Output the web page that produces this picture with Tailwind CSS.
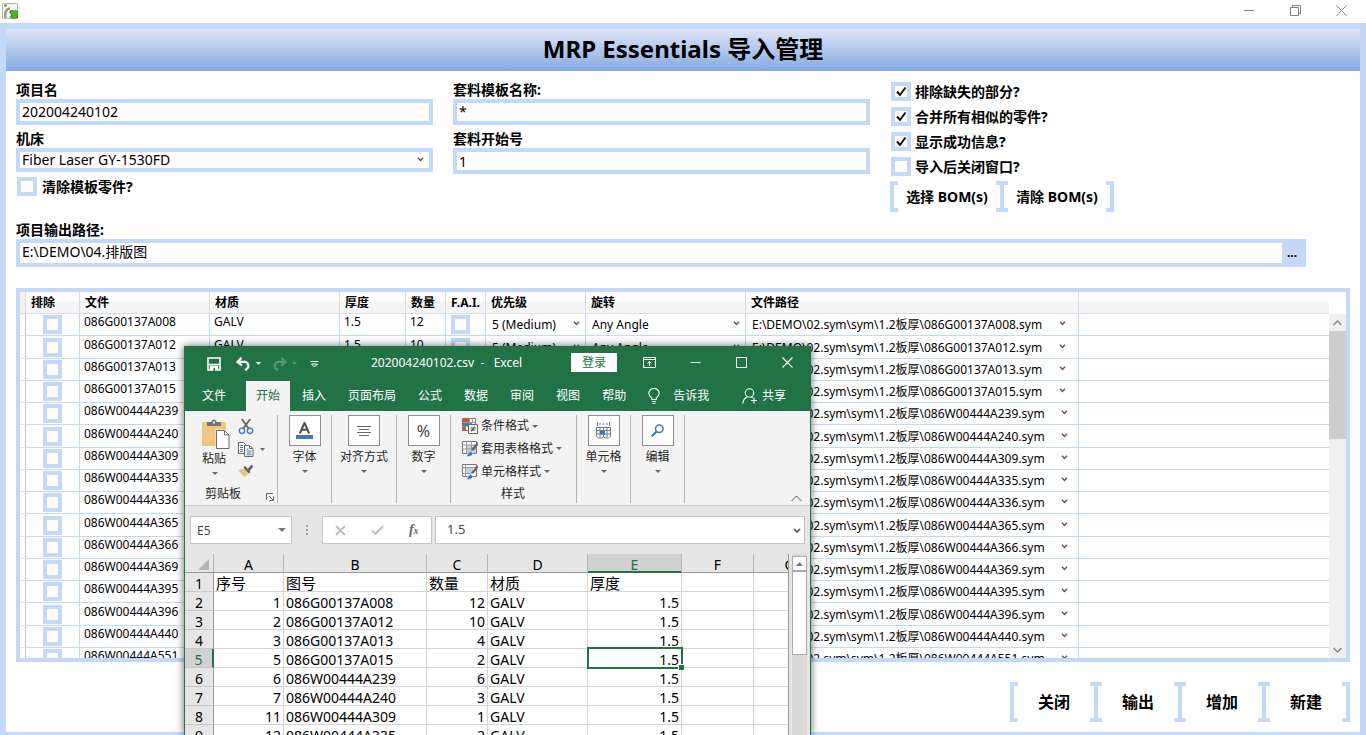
<!DOCTYPE html>
<html lang="zh-CN">
<head>
<meta charset="utf-8">
<title>MRP Essentials 导入管理</title>
<script src="https://cdn.jsdelivr.net/npm/@tailwindcss/browser@4"></script>
</head>
<body class="relative flex h-screen flex-col overflow-hidden bg-white font-['Noto_Sans','Noto_Sans_CJK_SC',sans-serif] text-sm text-black">

<!-- Window title bar -->
<header class="flex h-[23px] shrink-0 items-start justify-between">
  <svg class="mt-[3px] ml-[2px] size-4" viewBox="0 0 16 16">
    <rect x=".5" y=".5" width="15" height="15" rx="1" fill="#f6f6f6" stroke="#b4b4b4"/>
    <path d="M3.300 15v-3.500c0-3.500 1.700-5.500 4.700-6" fill="none" stroke="#9a9a94" stroke-width="2.400"/>
    <path d="M3.500 1v3M2 2.500h3" stroke="#5cc22c" stroke-width="1.600"/>
    <path d="M7.500 9c.8-2 3-2.200 4.800-.4l1.200-1.400 2 1.300v6.500H9.500L8 13.500l2-1.300c-.8-1.200-1.500-1.700-2.500-3.200z" fill="#4fb322" stroke="#2b7a14" stroke-width=".8"/>
  </svg>
  <div class="mr-0.5 flex h-5 text-[#808080]">
    <button aria-label="最小化" class="grid w-[46px] place-items-center"><svg class="size-[11px]" viewBox="0 0 11 11"><path d="M0 5.500h10" stroke="currentColor"/></svg></button>
    <button aria-label="还原" class="grid w-[46px] place-items-center"><svg class="size-[11px]" viewBox="0 0 11 11" fill="none" stroke="currentColor"><path d="M.5 2.500h8v8h-8zM2.500 2.500v-2h8v8h-2"/></svg></button>
    <button aria-label="关闭窗口" class="grid w-[46px] place-items-center"><svg class="size-[11px]" viewBox="0 0 11 11"><path d="M.5 .5l10 10M10.500 .5l-10 10" stroke="currentColor"/></svg></button>
  </div>
</header>

<main class="flex min-h-0 flex-1 flex-col border-x-[6px] border-t-[6px] border-b-[3px] border-[#c4d8f8]">
  <h1 class="shrink-0 bg-linear-to-b from-[#dfe4f6] to-[#86abe1] pb-0.5 text-center text-2xl leading-10 font-bold">MRP Essentials 导入管理</h1>

  <div class="flex min-h-0 flex-1 flex-col px-2.5 pt-2.5 pb-2.5">
    <form class="grid shrink-0 grid-cols-[417fr_417fr_460fr] gap-x-5">
      <div>
        <label for="project" class="block leading-[18px] font-bold">项目名</label>
        <input id="project" value="202004240102" class="block h-[26px] w-full border-4 border-[#c4d8f8] bg-white px-0.5 pb-0.5">
        <label for="machine" class="mt-[5px] block leading-[18px] font-bold">机床</label>
        <div class="relative">
          <select id="machine" class="block h-6 w-full appearance-none border-4 border-[#c4d8f8] bg-white px-0.5 leading-4"><option>Fiber Laser GY-1530FD</option></select>
          <svg class="pointer-events-none absolute top-[9px] right-[9px] h-[5px] w-[7px]" viewBox="0 0 7 5" fill="none" stroke="#555" stroke-width="1.400"><path d="M1 .7l2.500 2.800L6 .7"/></svg>
        </div>
        <label class="mt-[5px] ml-px flex h-[19px] items-center gap-[5px] font-bold"><input type="checkbox" class="h-[19px] w-5 appearance-none border-4 border-[#c4d8f8] bg-white">清除模板零件?</label>
      </div>
      <div>
        <label for="tpl" class="block leading-[18px] font-bold">套料模板名称:</label>
        <input id="tpl" value="*" class="block h-[26px] w-full border-4 border-[#c4d8f8] bg-white px-0.5 pb-0.5">
        <label for="start" class="mt-[5px] block leading-[18px] font-bold">套料开始号</label>
        <input id="start" value="1" class="block h-[26px] w-full border-4 border-[#c4d8f8] bg-white px-0.5">
      </div>
      <div>
        <div class="mt-px ml-px flex flex-col gap-1.5 font-bold">
          <label class="grid h-[19px] grid-cols-[20px_1fr] items-center gap-x-1 leading-[18px]"><input type="checkbox" checked class="peer col-start-1 row-start-1 h-[19px] w-5 appearance-none border-4 border-[#c4d8f8] bg-white"><svg class="pointer-events-none invisible col-start-1 row-start-1 size-[11px] justify-self-center peer-checked:visible" viewBox="0 0 11 11"><path d="M1 5.500l3 3.500L9.500 1.500" fill="none" stroke="#111" stroke-width="2"/></svg>排除缺失的部分?</label>
          <label class="grid h-[19px] grid-cols-[20px_1fr] items-center gap-x-1 leading-[18px]"><input type="checkbox" checked class="peer col-start-1 row-start-1 h-[19px] w-5 appearance-none border-4 border-[#c4d8f8] bg-white"><svg class="pointer-events-none invisible col-start-1 row-start-1 size-[11px] justify-self-center peer-checked:visible" viewBox="0 0 11 11"><path d="M1 5.500l3 3.500L9.500 1.500" fill="none" stroke="#111" stroke-width="2"/></svg>合并所有相似的零件?</label>
          <label class="grid h-[19px] grid-cols-[20px_1fr] items-center gap-x-1 leading-[18px]"><input type="checkbox" checked class="peer col-start-1 row-start-1 h-[19px] w-5 appearance-none border-4 border-[#c4d8f8] bg-white"><svg class="pointer-events-none invisible col-start-1 row-start-1 size-[11px] justify-self-center peer-checked:visible" viewBox="0 0 11 11"><path d="M1 5.500l3 3.500L9.500 1.500" fill="none" stroke="#111" stroke-width="2"/></svg>显示成功信息?</label>
          <label class="grid h-[19px] grid-cols-[20px_1fr] items-center gap-x-1 leading-[18px]"><input type="checkbox" class="col-start-1 row-start-1 h-[19px] w-5 appearance-none border-4 border-[#c4d8f8] bg-white">导入后关闭窗口?</label>
        </div>
        <div class="mt-[5px] flex">
          <button type="button" class="flex h-[31px] w-[114px] items-center justify-between font-bold whitespace-nowrap before:h-full before:w-2 before:border-4 before:border-r-0 before:border-[#c4d8f8] after:h-full after:w-2 after:border-4 after:border-l-0 after:border-[#c4d8f8]">选择 BOM(s)</button>
          <button type="button" class="-ml-1 flex h-[31px] w-[114px] items-center justify-between font-bold whitespace-nowrap before:h-full before:w-2 before:border-4 before:border-r-0 before:border-[#c4d8f8] after:h-full after:w-2 after:border-4 after:border-l-0 after:border-[#c4d8f8]">清除 BOM(s)</button>
        </div>
      </div>
    </form>

    <div class="mt-[9px] mr-11 shrink-0">
      <label for="out" class="block leading-[18px] font-bold">项目输出路径:</label>
      <div class="flex h-7">
        <input id="out" value="E:\DEMO\04.排版图" class="min-w-0 flex-1 border-4 border-r-0 border-[#c4d8f8] bg-white px-0.5 pb-0.5">
        <button class="w-6 bg-[#c4d8f8] pr-1 text-xs font-bold">...</button>
      </div>
    </div>

    <!-- Part list -->
    <section class="mt-[21px] flex min-h-0 flex-1 border-4 border-[#c4d8f8]">
      <div class="min-w-0 flex-1 overflow-hidden">
        <table class="w-full table-fixed border-separate border-spacing-0 text-xs">
          <colgroup><col class="w-[6px]"><col class="w-[54px]"><col class="w-[130px]"><col class="w-[130px]"><col class="w-[66px]"><col class="w-[40px]"><col class="w-[40px]"><col class="w-[100px]"><col class="w-[160px]"><col class="w-[333px]"><col></colgroup>
          <thead class="bg-linear-to-b from-white from-40% to-[#f4f5f7] to-45%">
            <tr class="h-[22px] text-left whitespace-nowrap *:border-r *:border-b *:border-[#dcdcdc] *:pt-0 *:pb-0 *:pl-[5px] *:leading-4">
              <th class="bg-[#f0f0f0]"></th><th>排除</th><th>文件</th><th>材质</th><th>厚度</th><th>数量</th><th>F.A.I.</th><th>优先级</th><th>旋转</th><th>文件路径</th><th class="!border-r-0"></th>
            </tr>
          </thead>
          <tbody id="parts"></tbody>
        </table>
      </div>
      <div class="flex w-[17px] shrink-0 flex-col pt-[22px]">
        <div class="flex flex-1 flex-col items-center bg-[#f0f0f0]">
          <button aria-label="向上滚动" class="grid h-[17px] w-full place-items-center"><svg class="h-[6px] w-[9px]" viewBox="0 0 9 6" fill="none" stroke="#8a8a8a" stroke-width="1.500"><path d="M.7 5l3.800-4 3.800 4"/></svg></button>
          <div class="h-[108px] w-full bg-[#cdcdcd]"></div>
          <button aria-label="向下滚动" class="mt-auto grid h-[17px] w-full place-items-center"><svg class="h-[6px] w-[9px]" viewBox="0 0 9 6" fill="none" stroke="#8a8a8a" stroke-width="1.500"><path d="M.7 1l3.800 4 3.800-4"/></svg></button>
        </div>
      </div>
    </section>

    <div class="mt-5 flex shrink-0 justify-end">
      <button class="flex h-10 w-[88px] items-center justify-between text-base font-bold before:h-full before:w-2 before:border-4 before:border-r-0 before:border-[#c4d8f8] after:h-full after:w-2 after:border-4 after:border-l-0 after:border-[#c4d8f8]">关闭</button>
      <button class="-ml-1 flex h-10 w-[88px] items-center justify-between text-base font-bold before:h-full before:w-2 before:border-4 before:border-r-0 before:border-[#c4d8f8] after:h-full after:w-2 after:border-4 after:border-l-0 after:border-[#c4d8f8]">输出</button>
      <button class="-ml-1 flex h-10 w-[88px] items-center justify-between text-base font-bold before:h-full before:w-2 before:border-4 before:border-r-0 before:border-[#c4d8f8] after:h-full after:w-2 after:border-4 after:border-l-0 after:border-[#c4d8f8]">增加</button>
      <button class="-ml-1 flex h-10 w-[88px] items-center justify-between text-base font-bold before:h-full before:w-2 before:border-4 before:border-r-0 before:border-[#c4d8f8] after:h-full after:w-2 after:border-4 after:border-l-0 after:border-[#c4d8f8]">新建</button>
    </div>
  </div>
</main>

<!-- Excel window floating over the manager -->
<section aria-label="Excel" class="absolute top-[346px] bottom-0 left-[184px] flex w-[627px] flex-col overflow-hidden border-x border-[#217346] bg-[#e6e6e6] text-xs text-[#262626] shadow-[0_0_8px_rgba(0,0,0,0.6)]">
  <div class="flex h-[35px] shrink-0 items-center bg-[#217346] pb-0.5 text-white">
    <div class="flex w-[180px] items-center pt-0.5 pl-[22px]">
      <button aria-label="保存"><svg class="size-[14px]" viewBox="0 0 14 14"><path d="M1 1h12v12H1z" fill="none" stroke="#fff" stroke-width="1.600"/><path d="M1 7.500h12M3.500 13V9.500h7V13" fill="none" stroke="#fff" stroke-width="1.400"/><path d="M4 10h6v3H4z" fill="#fff"/><path d="M6.500 11h1.600v3H6.500z" fill="#217346"/></svg></button>
      <button aria-label="撤消" class="ml-[15px] flex items-center gap-[5px]"><svg class="h-[14px] w-[15px]" viewBox="0 0 15 14" fill="none" stroke="#fff" stroke-width="2.200"><path d="M5.500 .8L1.500 5l4.500 3.500M2 4.800h6.500a4 4 0 0 1 2 7.400l-1.500 .8"/></svg><svg class="h-[3px] w-[5px]" viewBox="0 0 5 3"><path d="M0 0h5L2.500 3z" fill="#fff"/></svg></button>
      <button aria-label="恢复" class="ml-[11px] flex items-center gap-[5px] opacity-25"><svg class="h-[14px] w-[15px]" viewBox="0 0 15 14" fill="none" stroke="#fff" stroke-width="2.200"><path d="M9.500 .8l4 4.200L9 8.500M13 4.800H6.500a4 4 0 0 0-2 7.400l1.500 .8"/></svg><svg class="h-[3px] w-[5px]" viewBox="0 0 5 3"><path d="M0 0h5L2.500 3z" fill="#fff"/></svg></button>
      <button aria-label="自定义快速访问工具栏" class="ml-[13px]"><svg class="h-[8px] w-[9px]" viewBox="0 0 9 8"><path d="M.5 1.500h8" stroke="#fff"/><path d="M1.500 4l3 3 3-3z" fill="none" stroke="#fff"/></svg></button>
    </div>
    <div class="flex-1 pl-[6px] whitespace-pre">202004240102.csv  -   Excel</div>
    <button class="h-[19px] w-[46px] bg-white text-[#217346]">登录</button>
    <button aria-label="功能区显示选项" class="ml-[9px] grid w-[46px] place-items-center"><svg class="h-[11px] w-[13px]" viewBox="0 0 13 11" fill="none" stroke="#fff"><path d="M.5 .5h12v10H.5zM.5 2.500h12M6.500 9V4.500M4.500 6.500l2-2 2 2"/></svg></button>
    <button aria-label="最小化 Excel" class="grid w-[46px] place-items-center"><svg class="h-[11px] w-[11px]" viewBox="0 0 11 11"><path d="M.5 5.500h10" stroke="#fff"/></svg></button>
    <button aria-label="最大化 Excel" class="grid w-[46px] place-items-center"><svg class="h-[11px] w-[11px]" viewBox="0 0 11 11"><path d="M.5 .5h10v10H.5z" fill="none" stroke="#fff"/></svg></button>
    <button aria-label="关闭 Excel" class="grid w-[46px] place-items-center"><svg class="h-[11px] w-[11px]" viewBox="0 0 11 11"><path d="M.5 .5l10 10M10.500 .5l-10 10" stroke="#fff" stroke-width="1.200"/></svg></button>
  </div>

  <nav class="flex h-[30px] shrink-0 items-stretch bg-[#217346] pl-[6px] text-white *:whitespace-nowrap">
    <button class="mx-px mr-[9px] px-2.5">文件</button>
    <button class="mx-px bg-[#f3f3f3] px-2.5 text-[#217346]">开始</button>
    <button class="mx-px px-2.5">插入</button>
    <button class="mx-px px-2.5">页面布局</button>
    <button class="mx-px px-2.5">公式</button>
    <button class="mx-px px-2.5">数据</button>
    <button class="mx-px px-2.5">审阅</button>
    <button class="mx-px px-2.5">视图</button>
    <button class="mx-px px-2.5">帮助</button>
    <button class="ml-[11px] flex items-center gap-[13px]"><svg class="h-[16px] w-[12px]" viewBox="0 0 12 16" fill="none" stroke="#fff" stroke-width="1.100"><path d="M3.800 11.500V10C2.500 9 .8 7.800 .8 5.600a5.200 5.200 0 0 1 10.400 0c0 2.200-1.700 3.400-3 4.400v1.500zM4 13.500h4M4.500 15.500h3"/></svg>告诉我</button>
    <button class="mr-6 ml-auto flex items-center gap-1"><svg class="size-4" viewBox="0 0 16 16" fill="none" stroke="#fff" stroke-width="1.100"><circle cx="7.500" cy="5" r="4.200"/><path d="M.8 15.500c.3-3.500 2-5.500 4.500-6.500M9.500 9l1.200 .8M12 9.500v6M9 12.500h6"/></svg>共享</button>
  </nav>

  <!-- Ribbon -->
  <div class="relative flex h-[95px] shrink-0 border-b border-[#d0d0d0] bg-[#f3f3f3] pt-1 pb-0.5 whitespace-nowrap">
    <div class="relative flex w-[93px] flex-col border-r border-[#b5b5b5] pl-[17px]">
      <div class="flex h-[70px] shrink-0 gap-2 pt-1">
        <button class="flex w-7 flex-col items-start">
          <svg class="h-[30px] w-7 shrink-0" viewBox="0 0 28 30"><path d="M0 3h24v24H0z" fill="#edc87e"/><path d="M5 7V3h4.500a2.500 2.500 0 0 1 5 0H19v4z" fill="#757575"/><path d="M11 2.500h2v2h-2z" fill="#f3f3f3"/><path d="M13.500 10.500h10l4.500 4.500v15H13.500z" fill="#f3f3f3"/><path d="M14.500 11.500h8l4.500 4.500v13.500H14.500z" fill="#fff" stroke="#6b6b6b"/><path d="M22.500 11.500V16H27" fill="none" stroke="#6b6b6b"/></svg>
          <span class="leading-5">粘贴</span>
          <svg class="mt-[3px] ml-[10px] h-[3px] w-[6px]" viewBox="0 0 6 3"><path d="M0 0h6L3 3z" fill="#666"/></svg>
        </button>
        <div class="flex flex-col items-start gap-[7px]">
          <button aria-label="剪切"><svg class="block size-4" viewBox="0 0 16 16" fill="none"><path d="M3.800 0L11 10M12.200 0L5 10" stroke="#666" stroke-width="1.900"/><circle cx="4" cy="11.800" r="2.700" stroke="#4478b4" stroke-width="1.300"/><circle cx="12" cy="11.800" r="2.700" stroke="#4478b4" stroke-width="1.300"/></svg></button>
          <button aria-label="复制" class="flex items-center gap-[6px]"><svg class="block h-[15px] w-4" viewBox="0 0 16 15" fill="#fff" stroke="#666"><path d="M.5 .5h5l2 2v9h-7z"/><path d="M6.500 3.500h5l3.500 3v8H6.500z"/><path d="M11.500 3.500v3H15" fill="none"/><path d="M2 3.500h3M2 5.500h3M2 7.500h3M2 9.500h3M8.500 7h2M8.500 9h5M8.500 11h5M8.500 12.800h5" stroke="#4478b4"/></svg><svg class="h-[3px] w-[5px]" viewBox="0 0 5 3"><path d="M0 0h5L2.500 3z" fill="#666"/></svg></button>
          <button aria-label="格式刷"><svg class="block h-[14px] w-4" viewBox="0 0 16 14"><path d="M0 6l6-1.500L11 9l-4.500 4.500z" fill="#edc380"/><path d="M5.500 3.500l5.500 6 1.500-1.500-5.500-6z" fill="#555"/><path d="M9 5.500L13.500 .8l2 1.700L11 7.500z" fill="#666"/></svg></button>
        </div>
      </div>
      <div class="pl-[3px] leading-[18px]">剪贴板</div>
      <button aria-label="剪贴板选项" class="absolute right-[3px] bottom-0.5"><svg class="block size-[8px]" viewBox="0 0 8 8" fill="none" stroke="#666"><path d="M.5 7V.5H7M3 3l4 4M7.500 3.500v4h-4"/></svg></button>
    </div>
    <button class="flex w-[54px] flex-col items-center border-r border-[#b5b5b5]">
      <span class="grid h-[31px] w-8 place-items-center border border-[#8f8f8f] bg-white"><svg class="size-[17px]" viewBox="0 0 17 17"><path d="M3.800 11.500L8.500 .8l4.700 10.700M5.500 7.800h6" fill="none" stroke="#505050" stroke-width="2"/><path d="M0 13h17v4H0z" fill="#4478b4"/></svg></span>
      <span class="mt-0.5 leading-[18px]">字体</span>
      <svg class="mt-[4px] h-[3px] w-[6px]" viewBox="0 0 6 3"><path d="M0 0h6L3 3z" fill="#666"/></svg>
    </button>
    <button class="flex w-[65px] flex-col items-center border-r border-[#b5b5b5]">
      <span class="grid h-[31px] w-8 place-items-center border border-[#8f8f8f] bg-white"><svg class="h-[12px] w-[14px]" viewBox="0 0 14 12"><path d="M0 1.500h14M2 4.500h10M0 7.500h14M2 10.500h10" stroke="#666"/></svg></span>
      <span class="mt-0.5 leading-[18px]">对齐方式</span>
      <svg class="mt-[4px] h-[3px] w-[6px]" viewBox="0 0 6 3"><path d="M0 0h6L3 3z" fill="#666"/></svg>
    </button>
    <button class="flex w-[54px] flex-col items-center border-r border-[#b5b5b5]">
      <span class="grid h-[31px] w-8 place-items-center border border-[#8f8f8f] bg-white text-base leading-5 text-[#444]">%</span>
      <span class="mt-0.5 leading-[18px]">数字</span>
      <svg class="mt-[4px] h-[3px] w-[6px]" viewBox="0 0 6 3"><path d="M0 0h6L3 3z" fill="#666"/></svg>
    </button>
    <div class="flex w-[126px] flex-col border-r border-[#b5b5b5] pl-[11px]">
      <div class="flex h-[70px] shrink-0 flex-col">
        <button class="flex h-[22px] items-center gap-[3px]"><svg class="size-4" viewBox="0 0 16 16"><path d="M.5 .5h13v12H.5z" fill="#fff" stroke="#777"/><path d="M1 1h6v3H1zM1 9h3v3H1z" fill="#d35230"/><path d="M1 5h9v3H1z" fill="#4478b4"/><path d="M.5 4.500h13M.5 8.500h13M7.500 .5v12M10.500 .5v4" stroke="#999" fill="none"/><path d="M6.500 6.500h9v9h-9z" fill="#fff" stroke="#666"/><path d="M8.500 10h5M8.500 12h5M12.500 8.500l-3 5" stroke="#444"/></svg><span>条件格式</span><svg class="h-[3px] w-[6px]" viewBox="0 0 6 3"><path d="M0 0h6L3 3z" fill="#666"/></svg></button>
        <button class="flex h-[23px] items-center gap-[3px]"><svg class="size-4" viewBox="0 0 16 16"><path d="M.5 .5h14v12H.5z" fill="#fff" stroke="#777"/><path d="M4 4h10v8H4z" fill="#bdd3ea"/><path d="M.5 4h14M.5 8h14M4.500 .5v12M9.500 .5v12" stroke="#999" fill="none"/><path d="M15.500 1l.5 3-5 6-2-1.500z" fill="#666"/><path d="M3.500 15.500c2 0 2-4 5-5.500l2.500 2c0 3-4 4-7.500 3.500z" fill="#4478b4" stroke="#fff" stroke-width=".6"/></svg><span>套用表格格式</span><svg class="h-[3px] w-[6px]" viewBox="0 0 6 3"><path d="M0 0h6L3 3z" fill="#666"/></svg></button>
        <button class="flex h-[23px] items-center gap-[3px]"><svg class="size-4" viewBox="0 0 16 16"><path d="M.5 .5h14v12H.5z" fill="#fff" stroke="#777"/><path d="M4 4h7v5H4z" fill="#bdd3ea"/><path d="M.5 3.500h14M.5 9.500h9M3.500 .5v12" stroke="#999" fill="none"/><path d="M15.500 1l.5 3-5 6-2-1.500z" fill="#666"/><path d="M3.500 15.500c2 0 2-4 5-5.500l2.500 2c0 3-4 4-7.500 3.500z" fill="#4478b4" stroke="#fff" stroke-width=".6"/></svg><span>单元格样式</span><svg class="h-[3px] w-[6px]" viewBox="0 0 6 3"><path d="M0 0h6L3 3z" fill="#666"/></svg></button>
      </div>
      <div class="pr-3 text-center leading-[18px]">样式</div>
    </div>
    <button class="flex w-[54px] flex-col items-center border-r border-[#b5b5b5]">
      <span class="grid h-[31px] w-8 place-items-center border border-[#8f8f8f] bg-white"><svg class="h-[17px] w-[15px]" viewBox="0 0 15 17" fill="none"><path d="M1.500 0v4M13.500 0v4M3 2h2M6.500 2h2M10 2h2" stroke="#4478b4"/><path d="M.5 5.500h14v9l-2 1.500H9l-1.500-1L6 16H2.500L.5 14.500zM.5 8.500h14M.5 12h14M4 5.500v10M11 5.500v10M7.500 5.500v3M7.500 12v3" stroke="#777"/><path d="M4 8.500h5v4H4z" fill="#4478b4"/></svg></span>
      <span class="mt-0.5 leading-[18px]">单元格</span>
      <svg class="mt-[4px] h-[3px] w-[6px]" viewBox="0 0 6 3"><path d="M0 0h6L3 3z" fill="#666"/></svg>
    </button>
    <button class="flex w-[54px] flex-col items-center border-r border-[#b5b5b5]">
      <span class="grid h-[31px] w-8 place-items-center border border-[#8f8f8f] bg-white"><svg class="size-[13px]" viewBox="0 0 13 13" fill="none" stroke="#4478b4"><circle cx="8.300" cy="4.700" r="3.800" stroke-width="1.500"/><path d="M5.500 7.500L.8 12.200" stroke-width="2.200"/></svg></span>
      <span class="mt-0.5 leading-[18px]">编辑</span>
      <svg class="mt-[4px] h-[3px] w-[6px]" viewBox="0 0 6 3"><path d="M0 0h6L3 3z" fill="#666"/></svg>
    </button>
    <button aria-label="折叠功能区" class="mr-2 mb-px ml-auto self-end"><svg class="block h-[7px] w-[11px]" viewBox="0 0 11 7"><path d="M.5 6L5.500 1l5 5" fill="none" stroke="#555"/></svg></button>
  </div>

  <!-- Formula bar -->
  <div class="flex shrink-0 px-[5px] pt-2.5">
    <div class="relative w-[102px]">
      <input aria-label="名称框" value="E5" class="h-7 w-full border border-[#c6c6c6] bg-white px-1.5 text-[#444]">
      <svg class="absolute top-3 right-[6px] h-[4px] w-[8px]" viewBox="0 0 8 4"><path d="M0 0h8L4 4z" fill="#777"/></svg>
    </div>
    <svg class="mt-[9px] ml-[14px] h-[10px] w-[2px]" viewBox="0 0 2 10"><path d="M0 0h2v2H0zM0 4h2v2H0zM0 8h2v2H0z" fill="#a0a0a0"/></svg>
    <div class="ml-[14px] flex h-7 w-[110px] items-center justify-around border border-[#c6c6c6] bg-white">
      <button aria-label="取消"><svg class="block size-[11px]" viewBox="0 0 11 11"><path d="M1 1l9 9M10 1l-9 9" stroke="#bdbdbd" stroke-width="1.800"/></svg></button>
      <button aria-label="输入"><svg class="block h-[10px] w-[13px]" viewBox="0 0 13 10"><path d="M1 5.500L4.500 9 12 1" fill="none" stroke="#bdbdbd" stroke-width="2"/></svg></button>
      <button aria-label="插入函数" class="font-['Liberation_Serif',serif] text-sm leading-5 font-bold text-[#666] italic">f<span class="text-[10px]">x</span></button>
    </div>
    <div class="relative ml-[3px] flex-1">
      <input aria-label="编辑栏" value="1.5" class="h-7 w-full border border-[#c6c6c6] bg-white px-[11px] pb-0.5 text-[13px] text-[#444]">
      <svg class="absolute top-3 right-[4px] h-[6px] w-[8px]" viewBox="0 0 8 6"><path d="M1 1l3 3 3-3" fill="none" stroke="#666" stroke-width="1.800"/></svg>
    </div>
  </div>

  <!-- Sheet -->
  <div class="mt-2.5 flex min-h-0 flex-1">
    <div class="w-[604px] overflow-hidden border-r border-[#999]">
      <table class="w-[641px] table-fixed border-separate border-spacing-0 text-sm leading-[15px] text-black">
        <colgroup><col class="w-[29px]"><col class="w-[70px]"><col class="w-[143px]"><col class="w-[61px]"><col class="w-[100px]"><col class="w-[94px]"><col class="w-[72px]"><col class="w-[72px]"></colgroup>
        <thead>
          <tr class="h-[19px] *:border-r *:border-b *:border-r-[#b5b5b5] *:border-b-[#999] *:px-0 *:pt-[3px] *:pb-0 *:font-normal">
            <th><svg class="mr-[4px] ml-auto size-[11px]" viewBox="0 0 11 11"><path d="M11 0v11H0z" fill="#b4b4b4"/></svg></th><th>A</th><th>B</th><th>C</th><th>D</th><th class="!border-b-[#217346] bg-[#d2d2d2] text-[#217346] shadow-[inset_0_-1px_0_#217346]">E</th><th>F</th><th>G</th>
          </tr>
        </thead>
        <tbody id="sheet"></tbody>
      </table>
    </div>
    <div class="ml-[3px] flex w-[15px] flex-col bg-[#dadada]">
      <button aria-label="工作表向上滚动" class="mt-0.5 grid h-[15px] shrink-0 place-items-center border border-[#ababab] bg-white"><svg class="h-[4px] w-[7px]" viewBox="0 0 7 4"><path d="M0 4h7L3.500 0z" fill="#777"/></svg></button>
      <div class="h-[84px] shrink-0 border border-[#ababab] bg-white"></div>
    </div>
  </div>
</section>

<script>
const parts = [
  ['086G00137A008', 12], ['086G00137A012', 10], ['086G00137A013', 4], ['086G00137A015', 2],
  ['086W00444A239', 6], ['086W00444A240', 3], ['086W00444A309', 1], ['086W00444A335', 2],
  ['086W00444A336', 1], ['086W00444A365', 1], ['086W00444A366', 1], ['086W00444A369', 1],
  ['086W00444A395', 1], ['086W00444A396', 1], ['086W00444A440', 1], ['086W00444A551', 1]
];
const numbers = [1, 2, 3, 5, 6, 7, 11, 12];
const box = label => `<input type="checkbox" aria-label="${label}" class="block size-[19px] appearance-none border-4 border-[#c4d8f8] bg-white">`;
const arrow = '<svg class="pointer-events-none absolute top-[7px] right-[5px] h-[5px] w-[7px]" viewBox="0 0 7 5" fill="none" stroke="#555" stroke-width="1.300"><path d="M1 .7l2.500 2.800L6 .7"/></svg>';

document.getElementById('parts').innerHTML = parts.map(([name, qty]) => `
  <tr class="h-[22px] whitespace-nowrap nth-[4n+2]:h-[23px] *:border-r *:border-b *:border-[#c4d8f8] *:p-0 *:align-top nth-[4n+2]:*:!pt-px">
    <th class="!border-r-[#c8c8c8] !border-b-[#e4e4e4]"></th>
    <td><div class="flex justify-center pt-px">${box('排除 ' + name)}</div></td>
    <td><div class="pl-1 leading-4">${name}</div></td>
    <td><div class="pl-1 leading-4">GALV</div></td>
    <td><div class="pl-1 leading-4">1.5</div></td>
    <td><div class="pl-1 leading-4">${qty}</div></td>
    <td><div class="pt-px pl-[5px]">${box('F.A.I. ' + name)}</div></td>
    <td><div class="relative"><select aria-label="优先级 ${name}" class="block h-[21px] w-full appearance-none pl-1.5"><option>5 (Medium)</option></select>${arrow}</div></td>
    <td><div class="relative"><select aria-label="旋转 ${name}" class="block h-[21px] w-full appearance-none pl-1.5"><option>Any Angle</option></select>${arrow}</div></td>
    <td><div class="relative w-fit"><select aria-label="文件路径 ${name}" class="block h-[21px] appearance-none pr-7 pl-1.5"><option>E:\\DEMO\\02.sym\\sym\\1.2板厚\\${name}.sym</option></select>${arrow}</div></td>
    <td class="!border-r-0"></td>
  </tr>`).join('');

const rowHead = (n, active) => `<th class="${active ? 'border-r-2 border-r-[#217346] bg-[#d2d2d2] text-[#217346]' : 'border-r border-r-[#999] bg-[#e6e6e6]'} border-b border-b-[#c6c6c6] px-0 pt-[3px] pb-0 font-normal">${n}</th>`;
const cell = (text, cls) => `<td class="border-r border-b border-[#d4d4d4] bg-white px-0.5 pt-[3px] pb-0 ${cls}">${text}</td>`;
let rows = `<tr class="h-[19px]">${rowHead(1, false)}${['序号', '图号', '数量', '材质', '厚度', '', ''].map(t => cell(t, 'text-[15px] leading-[15px]')).join('')}</tr>`;
numbers.forEach((n, i) => {
  const active = i === 3;
  const value = active
    ? '<td class="relative border-r border-b border-[#d4d4d4] bg-white px-0.5 pt-[3px] pb-0 text-right">1.5<span class="absolute -top-[2px] -right-[2px] -bottom-[2px] -left-[1px] border-2 border-[#217346]"></span><span class="absolute -right-[3px] -bottom-[3px] size-[6px] border-t border-l border-white bg-[#217346]"></span></td>'
    : cell('1.5', 'text-right');
  rows += `<tr class="h-[19px]">${rowHead(i + 2, active)}${cell(n, 'text-right')}${cell(parts[i][0], '')}${cell(parts[i][1], 'text-right')}${cell('GALV', '')}${value}${cell('', '')}${cell('', '')}</tr>`;
});
document.getElementById('sheet').innerHTML = rows;
</script>
</body>
</html>
